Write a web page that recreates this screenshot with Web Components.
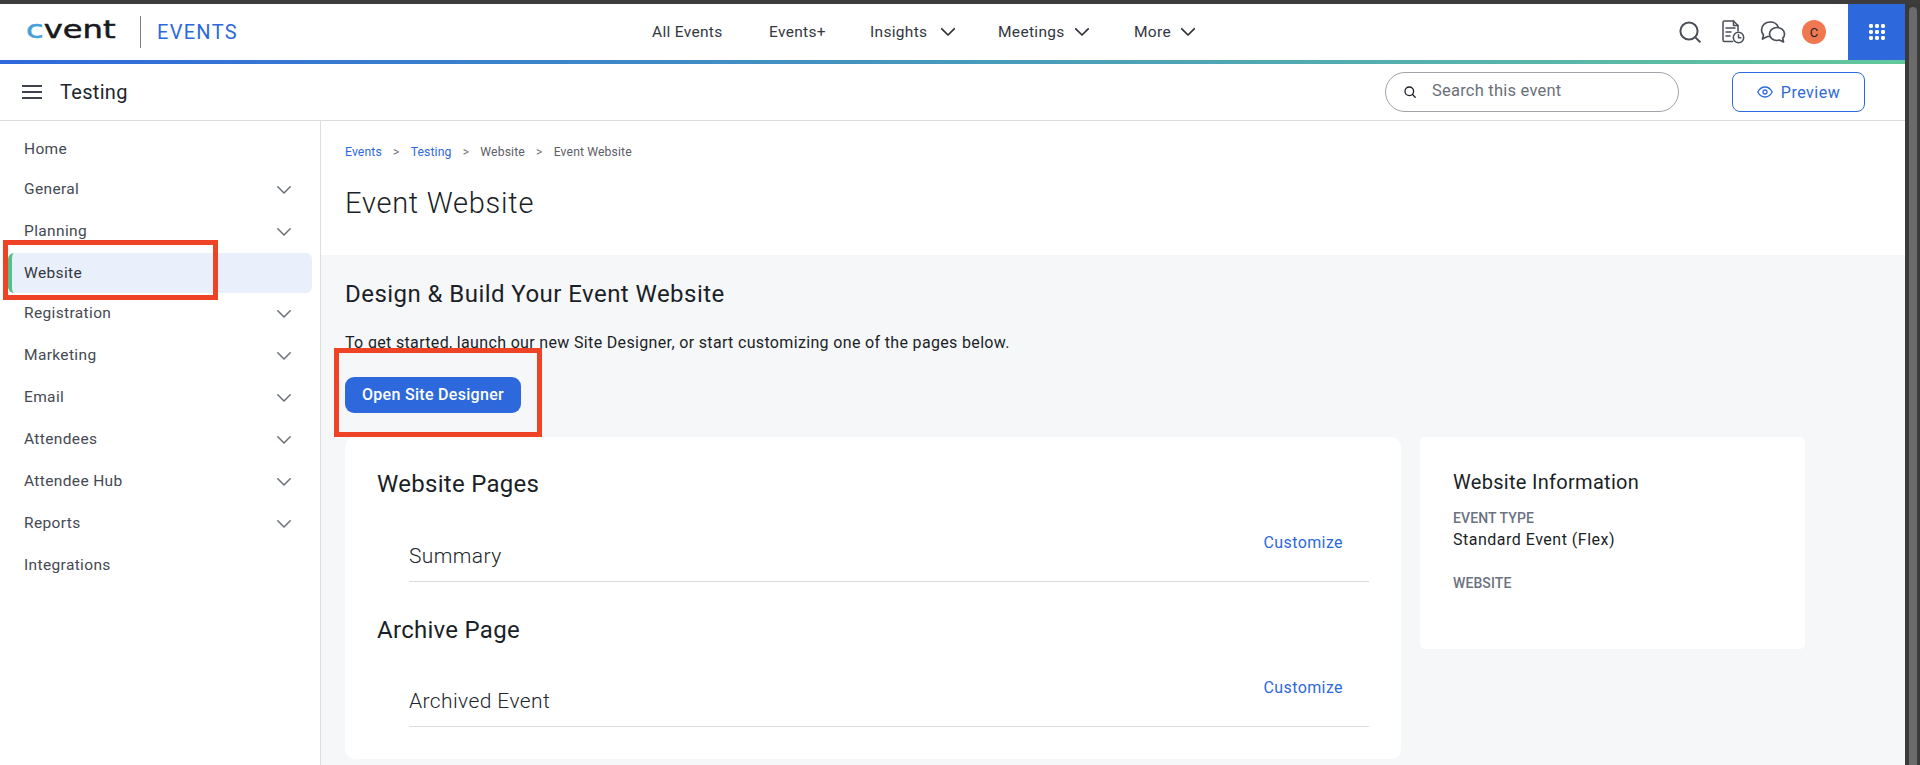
<!DOCTYPE html>
<html lang="en"><head><meta charset="utf-8"><title>Event Website</title>
<style>
html,body{margin:0;height:100%;overflow:hidden;background:#fff}
body{font-family:Roboto,"Liberation Sans",sans-serif;color:#1b1f27}
</style></head><body>
<cv-page>
  <cv-topbar></cv-topbar>
  <cv-subbar title-text="Testing"></cv-subbar>
  <cv-body>
    <cv-sidebar>
      <cv-nav-item>Home</cv-nav-item>
      <cv-nav-item expandable>General</cv-nav-item>
      <cv-nav-item expandable>Planning</cv-nav-item>
      <cv-nav-item active>Website</cv-nav-item>
      <cv-nav-item expandable>Registration</cv-nav-item>
      <cv-nav-item expandable>Marketing</cv-nav-item>
      <cv-nav-item expandable>Email</cv-nav-item>
      <cv-nav-item expandable>Attendees</cv-nav-item>
      <cv-nav-item expandable>Attendee Hub</cv-nav-item>
      <cv-nav-item expandable>Reports</cv-nav-item>
      <cv-nav-item>Integrations</cv-nav-item>
    </cv-sidebar>
    <cv-main>
      <cv-breadcrumbs></cv-breadcrumbs>
      <cv-design-section></cv-design-section>
    </cv-main>
  </cv-body>
  <cv-scrollbar></cv-scrollbar>
  <cv-callout style="left:3px;top:240px;width:215px;height:60px"></cv-callout>
  <cv-callout style="left:334px;top:348px;width:208px;height:89px"></cv-callout>
</cv-page>
<script>
const chevron=(w,h,c,sw)=>`<svg width="${w}" height="${h}" viewBox="0 0 14 8" fill="none" style="display:block;flex:none"><path d="M.8.8 7 7l6.2-6.2" stroke="${c}" stroke-width="${sw}" stroke-linecap="round" stroke-linejoin="round"/></svg>`;
function def(name,css,html){
  customElements.define(name,class extends HTMLElement{
    constructor(){super();const r=this.attachShadow({mode:'open'});
      r.innerHTML=`<style>${css}</style>${typeof html==='function'?html(this):html}`;}
  });
}
def('cv-page',`:host{display:block;position:relative;width:1920px;height:765px;overflow:hidden;border-top:4px solid #3c3c3c;box-sizing:border-box}`,`<slot></slot>`);

def('cv-topbar',`
:host{display:flex;align-items:center;height:56px;width:1905px;box-sizing:border-box;background:#fff;position:relative}
.logo{width:141px;padding-left:26px;box-sizing:border-box;flex:none;height:32px;border-right:1px solid #7b7f86;display:flex;align-items:center}
.word{font:400 24px/32px "DejaVu Sans",sans-serif;-webkit-text-stroke:.5px #17191e;color:#17191e;transform:scaleX(1.34);transform-origin:left center;display:block;margin-top:-4px}
.word b{font-weight:400;color:#43a0dc;-webkit-text-stroke:.5px #43a0dc}
.product{margin-left:16px;width:82px;font-size:20px;line-height:24px;color:#2d69dc;letter-spacing:1.3px;margin-top:-1px;flex:none}
nav{display:flex;align-items:center;margin-left:413px;font-size:15.5px;letter-spacing:.32px;color:#33373e;font-weight:400;margin-top:-1px}
nav span{display:flex;align-items:center;gap:14px;white-space:nowrap}
nav span.tight{gap:10px}
.right{margin-left:auto;display:flex;align-items:center;height:100%}
.ic{display:block;flex:none}
.av{width:24px;height:24px;border-radius:50%;background:#f07850;color:#1b1f27;font-size:13px;display:flex;align-items:center;justify-content:center;margin-left:16px}
.apps{width:57px;height:56px;background:#2d69dc;margin-left:22px;display:flex;align-items:center;justify-content:center}
`,`<div class="logo"><span class="word"><b>c</b>vent</span></div>
<span class="product">EVENTS</span>
<nav>
<span style="width:117px">All Events</span>
<span style="width:101px">Events+</span>
<span style="width:128px">Insights ${chevron(14,8,'#2f333a',1.7)}</span>
<span class="tight" style="width:136px">Meetings ${chevron(14,8,'#2f333a',1.7)}</span>
<span class="tight">More ${chevron(14,8,'#2f333a',1.7)}</span>
</nav>
<div class="right">
<svg class="ic" width="24" height="24" viewBox="0 0 24 24" fill="none" stroke="#4a4e56" stroke-width="2" stroke-linecap="round"><circle cx="11" cy="11" r="8.6"/><path d="m17.6 17.6 4.2 4.2"/></svg>
<svg class="ic" width="24" height="24" viewBox="0 0 24 24" fill="none" stroke="#4a4e56" stroke-width="1.5" stroke-linecap="round" stroke-linejoin="round" style="margin-left:19px"><path d="M11.5 21.5H3.5a1.5 1.5 0 0 1-1.5-1.5V2.5A1.5 1.5 0 0 1 3.500 1h9l4.500 4.500V11"/><path d="M12.500 1v4.500H17M5 8h9M5 12h5M5 16h4"/><circle cx="17.500" cy="17.500" r="5.200"/><path d="M17.500 14.800v2.900h2.400"/></svg>
<svg class="ic" width="26" height="24" viewBox="0 0 26 24" fill="none" stroke="#4a4e56" stroke-width="1.700" stroke-linecap="round" stroke-linejoin="round" style="margin-left:15px"><path d="M9 16.500H7.500L2.500 19l1-4A7.700 7.700 0 0 1 1.500 10C1.500 5.300 5.600 2 10.200 2c3.800 0 6.800 2 8 5"/><path d="M17 7.500c4.200 0 7.500 2.800 7.500 6.500a6 6 0 0 1-1.800 4.300l.8 3.700-4.200-2A8.600 8.600 0 0 1 17 20.500c-4.200 0-7.500-2.900-7.500-6.500s3.300-6.500 7.500-6.500Z"/></svg>
<span class="av">C</span>
<div class="apps"><svg width="16" height="16" viewBox="0 0 16 16" fill="#fff"><rect x="0" y="0" width="4" height="4" rx="1.400"/><rect x="6" y="0" width="4" height="4" rx="1.400"/><rect x="12" y="0" width="4" height="4" rx="1.400"/><rect x="0" y="6" width="4" height="4" rx="1.400"/><rect x="6" y="6" width="4" height="4" rx="1.400"/><rect x="12" y="6" width="4" height="4" rx="1.400"/><rect x="0" y="12" width="4" height="4" rx="1.400"/><rect x="6" y="12" width="4" height="4" rx="1.400"/><rect x="12" y="12" width="4" height="4" rx="1.400"/></svg></div>
</div>
<div style="position:absolute;left:0;right:0;bottom:-4px;height:4px;background:linear-gradient(90deg,#2d69dc 0%,#62c89c 100%)"></div>`);

def('cv-subbar',`
:host{display:flex;align-items:center;height:57px;margin-top:4px;width:1905px;box-sizing:border-box;border-bottom:1px solid #dcdcdc;background:#fff;padding-left:22px}
.title{font-size:20px;line-height:28px;letter-spacing:.3px;margin-left:18px;color:#22252c}
.search{margin-left:auto;width:294px;height:40px;box-sizing:border-box;border:1px solid #a0a2a8;border-radius:20px;display:flex;align-items:center;padding-left:18px;color:#6b7078;font-size:16.5px;letter-spacing:.22px;margin-top:-1px}
.search span{margin-left:16px;margin-top:-2px}
.prev{margin-left:53px;margin-right:40px;width:133px;height:40px;box-sizing:border-box;border:1px solid #2d69dc;border-radius:8px;display:flex;align-items:center;justify-content:center;gap:8px;color:#2d69dc;font-size:16px;letter-spacing:.5px;margin-top:-1px}
.prev span{margin-top:1px}
`,`<svg width="20" height="14" viewBox="0 0 20 14" stroke="#3f434b" stroke-width="2" style="display:block"><path d="M0 1h20M0 7h20M0 13h20"/></svg>
<span class="title">Testing</span>
<div class="search"><svg width="12" height="12" viewBox="0 0 12 12" fill="none" stroke="#1b1f27" stroke-width="1.300" stroke-linecap="round"><circle cx="5.300" cy="5.300" r="4.300"/><path d="m8.500 8.500 2.700 2.700"/></svg><span>Search this event</span></div>
<div class="prev"><svg width="16" height="12" viewBox="0 0 16 12" fill="none" stroke="#2d69dc" stroke-width="1.300"><path d="M.8 6C2.500 2.800 5 1 8 1s5.500 1.800 7.200 5C13.500 9.200 11 11 8 11S2.500 9.200.8 6Z"/><circle cx="8" cy="6" r="2"/></svg><span>Preview</span></div>`);

def('cv-body',`:host{display:grid;grid-template-columns:321px 1584px;height:644px}`,`<slot></slot>`);
def('cv-sidebar',`:host{display:flex;flex-direction:column;box-sizing:border-box;padding-top:8px;border-right:1px solid #dedede;background:#fff;overflow:hidden}`,`<slot></slot>`);
def('cv-nav-item',`
:host{display:flex;align-items:center;justify-content:space-between;height:42px;box-sizing:border-box;margin:0 8px;padding:0 21px 0 16px;font-size:15.5px;letter-spacing:.36px;color:#454952}
:host(:not([expandable])){height:40px}
:host([active]){background:#e9f0fc;border-radius:6px;border-left:4px solid #55c08e;padding-left:12px;margin-right:8px;color:#33373e}
:host([expandable]) .label{margin-top:-2px}
`,h=>`<span class="label"><slot></slot></span>${h.hasAttribute('expandable')?chevron(14,8,'#6b7078',1.500):''}`);

def('cv-main',`:host{display:flex;flex-direction:column;background:#fff;overflow:hidden}
`,`<slot></slot>`);
def('cv-breadcrumbs',`
:host{display:block;padding:22px 0 0 24px;height:134px;box-sizing:border-box;flex:none}
.crumbs{display:flex;align-items:center;height:18px;font-size:12.2px;letter-spacing:.12px;color:#5c6068;white-space:nowrap}
.crumbs a{color:#2d69dc}
.crumbs i{font-style:normal;color:#70747c;margin:0 11.200px}
h1{font-size:29px;font-weight:300;line-height:40px;margin:22px 0 0;color:#1b1f27;letter-spacing:.75px}
`,`<div class="crumbs"><a>Events</a><i>&gt;</i><a>Testing</a><i>&gt;</i><span>Website</span><i>&gt;</i><span>Event Website</span></div><h1>Event Website</h1>`);

def('cv-design-section',`
:host{display:block;background:#f6f7f9;flex:1;padding:24px 0 0 24px}
h2{font-size:24px;font-weight:400;line-height:30px;margin:0;color:#1b1f27;letter-spacing:.45px}
p{margin:22px 0 0;font-size:16px;line-height:24px;color:#1b1f27;letter-spacing:.34px}
button{display:block;margin:22px 0 24px;width:176px;height:36px;border:0;border-radius:9px;background:#2d69dc;color:#fff;font:500 16px/36px Roboto,sans-serif;letter-spacing:.3px;padding:0}
.cols{display:grid;grid-template-columns:1056px 385px;gap:19px;align-items:start}
`,`<h2>Design &amp; Build Your Event Website</h2>
<p>To get started, launch our new Site Designer, or start customizing one of the pages below.</p>
<button>Open Site Designer</button>
<div class="cols"><cv-pages-card></cv-pages-card><cv-info-card></cv-info-card></div>`);

def('cv-pages-card',`
:host{display:block;height:322px;background:#fff;border-radius:10px;padding:31px 32px 0;box-sizing:border-box}
h3{font-size:24px;font-weight:400;line-height:32px;margin:0;color:#1b1f27;letter-spacing:.28px}
h3.second{margin-top:32px}
`,`<h3>Website Pages</h3><cv-page-row style="--row-h:82px">Summary</cv-page-row><h3 class="second">Archive Page</h3><cv-page-row style="--row-h:81px">Archived Event</cv-page-row>`);

def('cv-page-row',`
:host{display:flex;justify-content:space-between;align-items:flex-end;height:var(--row-h);box-sizing:border-box;margin-left:32px;border-bottom:1px solid #dcdcdc;padding:0 26px 10px 0;font-size:21px;font-weight:300;line-height:30px;color:#22252c;letter-spacing:.4px}
a{font-size:16px;font-weight:400;line-height:24px;color:#2d69dc;margin-bottom:16px;letter-spacing:.4px}
`,`<slot></slot><a>Customize</a>`);

def('cv-info-card',`
:host{display:block;height:212px;background:#fff;border-radius:5px;padding:31px 33px 0;box-sizing:border-box}
h3{font-size:20px;font-weight:400;line-height:28px;margin:0;color:#1b1f27;letter-spacing:.3px}
dt{font-size:14px;font-weight:500;line-height:18px;color:#6b7280;letter-spacing:.1px}
dl{margin:13px 0 0}
dd{margin:2px 0 23px;font-size:16px;line-height:22px;color:#1b1f27;letter-spacing:.5px}
`,`<h3>Website Information</h3><dl><dt>EVENT TYPE</dt><dd>Standard Event (Flex)</dd><dt>WEBSITE</dt></dl>`);

def('cv-scrollbar',`:host{position:absolute;right:0;top:-4px;bottom:0;width:15px;background:#3a3a3a}
.t{position:absolute;left:4px;width:8px;top:7px;bottom:0;background:#6b6b6b;border-radius:4px 4px 0 0}`,`<div class="t"></div>`);
def('cv-callout',`:host{position:absolute;box-sizing:border-box;border:5px solid #ee4325;margin-top:-4px}`,``);
</script>
</body></html>
